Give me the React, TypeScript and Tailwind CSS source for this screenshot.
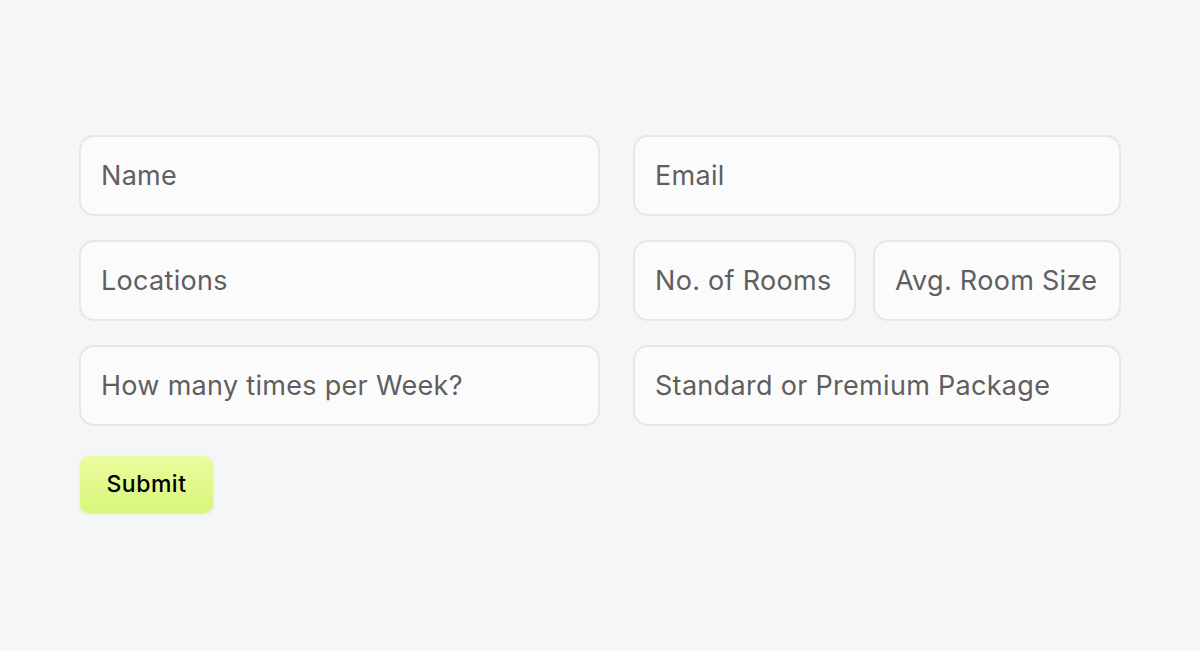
const field =
  'flex h-[81px] items-center rounded-[15px] border-2 border-[#e6e7e9] bg-[#fbfbfb] pl-[20px] pt-[2px] text-[27px] text-[#5f5f5f] tracking-[0.3px] whitespace-nowrap overflow-hidden'

function Field({ label, className = '' }: { label: string; className?: string }) {
  return <div className={`${field} ${className}`}>{label}</div>
}

export default function App() {
  return (
    <div
      className="min-h-[651px] w-full bg-[#f5f6f8] pt-[135px] pl-[79px] pr-[78px]"
      style={{ fontFamily: 'Inter, "Noto Sans", sans-serif' }}
    >
      <div className="grid grid-cols-[521px_488px] gap-x-[33px] gap-y-[24px]">
        <Field label="Name" />
        <Field label="Email" />
        <Field label="Locations" />
        <div className="flex gap-[17px]">
          <Field label="No. of Rooms" className="w-[223px]" />
          <Field label="Avg. Room Size" className="flex-1" />
        </div>
        <Field label="How many times per Week?" />
        <Field label="Standard or Premium Package" />
      </div>
      <button
        type="button"
        className="mt-[30px] ml-[1px] h-[57px] w-[133px] rounded-[9px] bg-gradient-to-b from-[#eafc9c] to-[#d9f57c] text-[23px] font-medium tracking-[0.5px] text-black shadow-[0_1px_3px_rgba(180,210,80,0.35)]"
      >
        Submit
      </button>
    </div>
  )
}
